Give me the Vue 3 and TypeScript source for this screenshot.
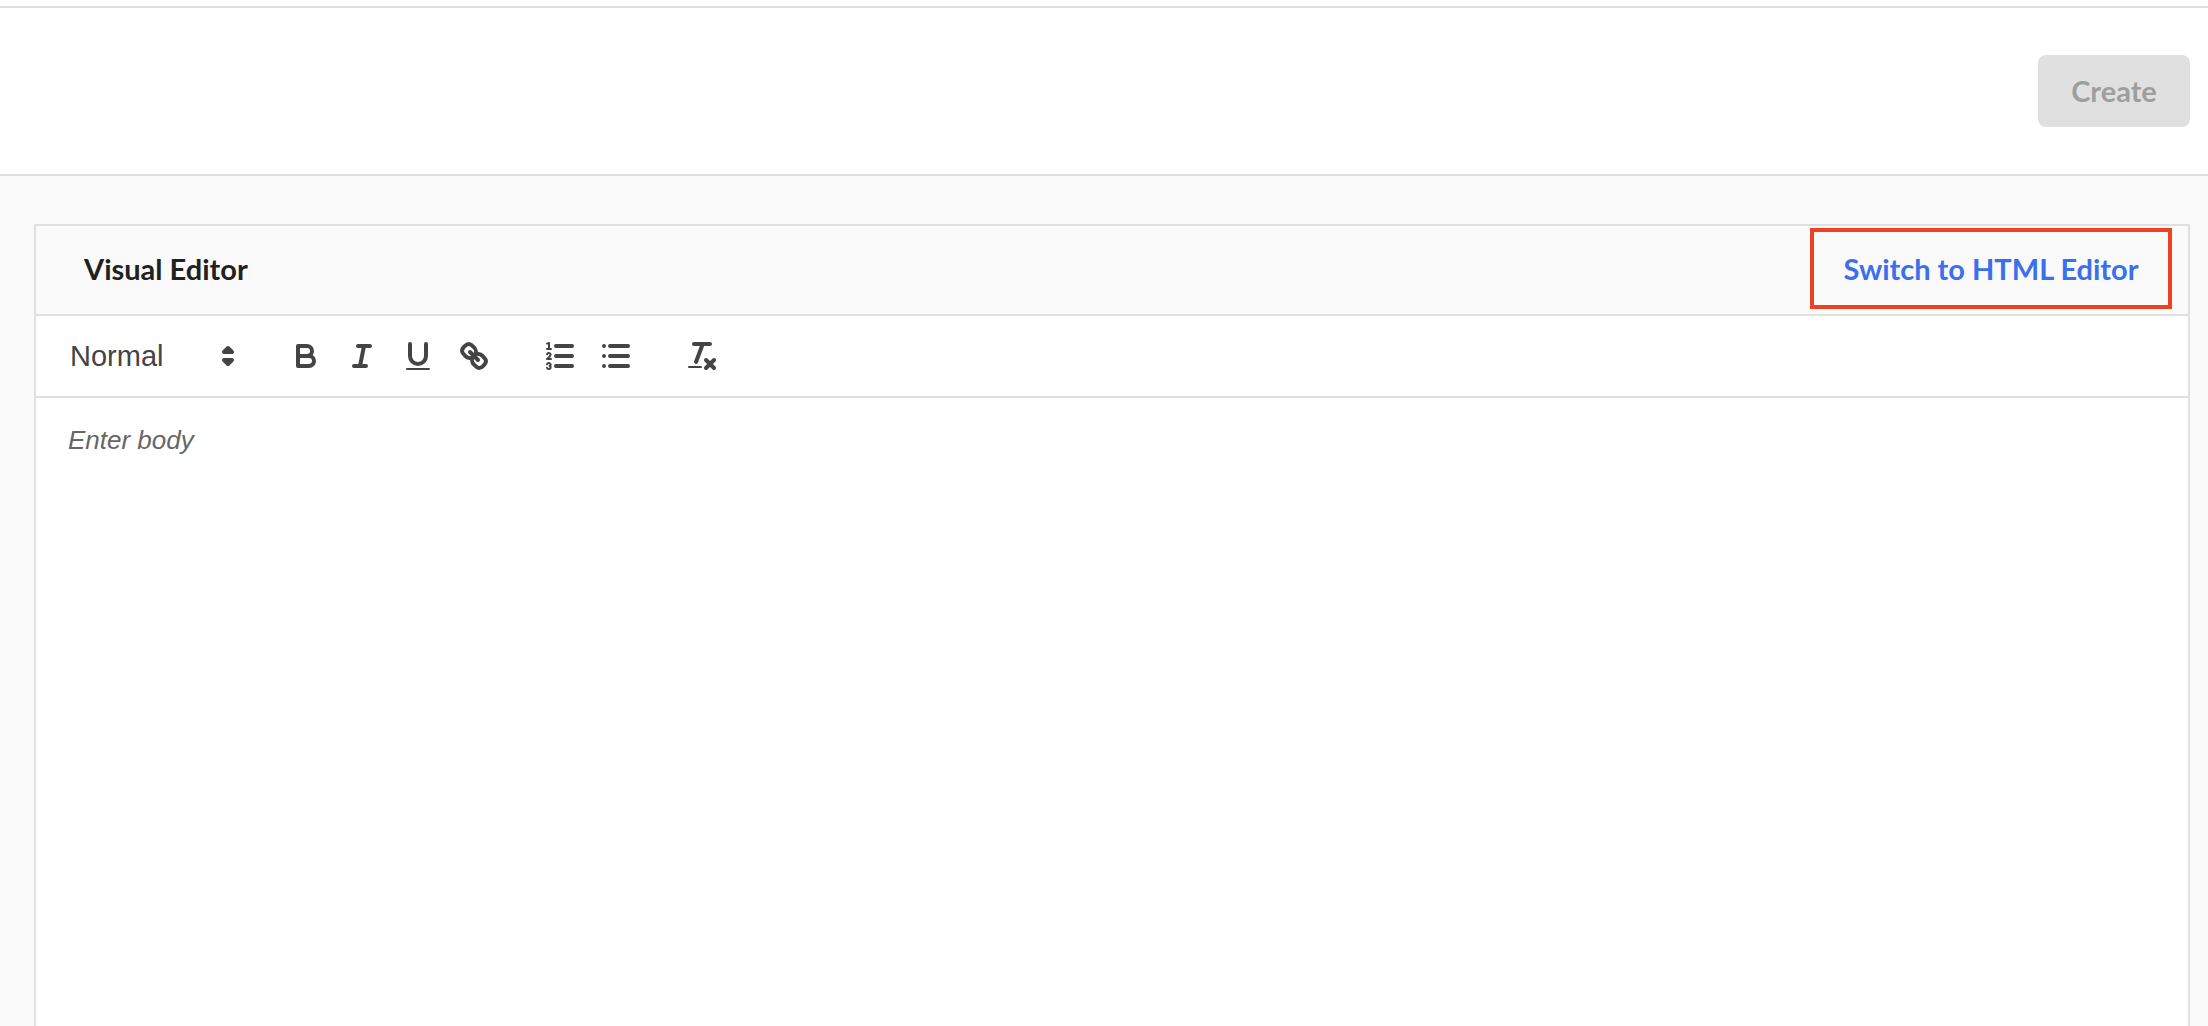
<script setup lang="ts">
import { ref } from 'vue'

const format = ref('Normal')
const body = ref('')
</script>

<template>
  <div class="page">
    <header class="topbar">
      <button class="create" type="button" disabled>Create</button>
    </header>
    <main class="content">
      <section class="editor">
        <div class="editor-head">
          <h2 class="title">Visual Editor</h2>
          <button class="switch" type="button">Switch to HTML Editor</button>
        </div>
        <div class="toolbar" role="toolbar" aria-label="Formatting">
          <div class="picker">
            <select v-model="format" aria-label="Text style">
              <option>Normal</option>
              <option>Heading 1</option>
              <option>Heading 2</option>
            </select>
            <svg class="icon" viewBox="0 0 18 18" aria-hidden="true">
              <polygon class="solid" points="7 11 9 13 11 11 7 11" />
              <polygon class="solid" points="7 7 9 5 11 7 7 7" />
            </svg>
          </div>
          <div class="group">
            <button type="button" class="tool" aria-label="Bold">
              <svg class="icon" viewBox="0 0 18 18">
                <path d="M5,4H9.5A2.5,2.5,0,0,1,12,6.5v0A2.5,2.5,0,0,1,9.5,9H5A0,0,0,0,1,5,9V4A0,0,0,0,1,5,4Z" />
                <path d="M5,9h5.5A2.5,2.5,0,0,1,13,11.5v0A2.5,2.5,0,0,1,10.5,14H5a0,0,0,0,1,0,0V9A0,0,0,0,1,5,9Z" />
              </svg>
            </button>
            <button type="button" class="tool" aria-label="Italic">
              <svg class="icon" viewBox="0 0 18 18">
                <path d="M7,4H13M5,14H11M8,14L10,4" />
              </svg>
            </button>
            <button type="button" class="tool" aria-label="Underline">
              <svg class="icon" viewBox="0 0 18 18">
                <path d="M5,3V9a4.012,4.012,0,0,0,4,4H9a4.012,4.012,0,0,0,4-4V3" />
                <rect class="fill" x="3" y="15" width="12" height="1" rx="0.5" />
              </svg>
            </button>
            <button type="button" class="tool" aria-label="Link">
              <svg class="icon" viewBox="0 0 18 18">
                <path d="M7,7L11,11" />
                <path d="M8.9,4.577a3.476,3.476,0,0,1,.36,4.679A3.476,3.476,0,0,1,4.577,8.9C3.185,7.5,2.035,6.4,4.217,4.217S7.5,3.185,8.9,4.577Z" />
                <path d="M13.423,9.1a3.476,3.476,0,0,0-4.679-.36,3.476,3.476,0,0,0,.36,4.679c1.392,1.392,2.5,2.542,4.679.36S14.815,10.5,13.423,9.1Z" />
              </svg>
            </button>
          </div>
          <div class="group">
            <button type="button" class="tool" aria-label="Numbered list">
              <svg class="icon" viewBox="0 0 18 18">
                <path d="M7,4H15M7,9H15M7,14H15" />
                <path class="thin" d="M2.5,5.5H4.5" />
                <path class="fill" d="M3.5,6A0.5,0.5,0,0,1,3,5.5V3.085l-0.276.138A0.5,0.5,0,0,1,2.053,3c-0.124-.247-0.023-0.324.224-0.447l1-.5A0.5,0.5,0,0,1,4,2.5v3A0.5,0.5,0,0,1,3.5,6Z" />
                <path class="thin" d="M4.5,10.5h-2c0-.234,1.85-1.076,1.85-2.234A0.959,0.959,0,0,0,2.5,8.156" />
                <path class="thin" d="M2.5,14.846a0.959,0.959,0,0,0,1.85-.109A0.7,0.7,0,0,0,3.75,14a0.688,0.688,0,0,0,.6-0.736,0.959,0.959,0,0,0-1.85-.109" />
              </svg>
            </button>
            <button type="button" class="tool" aria-label="Bulleted list">
              <svg class="icon" viewBox="0 0 18 18">
                <path d="M6,4H15M6,9H15M6,14H15M3,4H3M3,9H3M3,14H3" />
              </svg>
            </button>
          </div>
          <div class="group">
            <button type="button" class="tool" aria-label="Clear formatting">
              <svg class="icon" viewBox="0 0 18 18">
                <path d="M5,3H13M6,12L9.35,3M11,11L15,15M15,11L11,15" />
                <rect class="fill" x="2" y="14" width="7" height="1" rx="0.5" />
              </svg>
            </button>
          </div>
        </div>
        <textarea v-model="body" class="body" placeholder="Enter body" aria-label="Body"></textarea>
      </section>
    </main>
  </div>
</template>

<style>
body {
  margin: 0;
}
</style>

<style scoped>
* {
  box-sizing: border-box;
}
.page {
  display: flex;
  flex-direction: column;
  min-height: 100vh;
  padding-top: 6px;
  background: #fff;
  font-family: Lato, "Liberation Sans", sans-serif;
}
.topbar {
  display: flex;
  justify-content: flex-end;
  align-items: center;
  height: 170px;
  padding: 0 18px;
  border-top: 2px solid #dfdfdf;
  border-bottom: 2px solid #dfdfdf;
}
button {
  border: 0;
  background: none;
  font: inherit;
}
.create {
  min-width: 152px;
  height: 72px;
  padding: 0 32px 2px;
  border-radius: 8px;
  background: #e0e0e0;
  color: #9e9e9e;
  font-size: 29px;
  font-weight: 700;
}
.content {
  flex: 1;
  display: flex;
  padding: 48px 18px 0 34px;
  background: #fafafa;
}
.editor {
  flex: 1;
  display: flex;
  flex-direction: column;
  border: 2px solid #e0e0e0;
  border-bottom: 0;
}
.editor-head {
  display: flex;
  justify-content: space-between;
  align-items: flex-start;
  height: 90px;
  padding: 2px 16px 0 48px;
  border-bottom: 2px solid #e0e0e0;
}
.title {
  margin: 0;
  color: #212121;
  font-size: 29px;
  font-weight: 700;
  line-height: 82px;
}
.switch {
  min-width: 362px;
  height: 81px;
  padding: 0 28px;
  border: 4px solid #ee4023;
  color: #3a6fee;
  font-size: 29px;
  font-weight: 700;
}
.toolbar {
  display: flex;
  gap: 30px;
  padding: 16px;
  border-bottom: 2px solid #e0e0e0;
  background: #fff;
}
.picker {
  position: relative;
  width: 196px;
  height: 48px;
}
.picker select {
  width: 100%;
  height: 100%;
  padding: 0 40px 0 18px;
  border: 0;
  appearance: none;
  background: none;
  color: #444;
  font: 500 29px "Liberation Sans", Arial, sans-serif;
}
.picker .icon {
  position: absolute;
  top: 6px;
  right: 2px;
  pointer-events: none;
}
.group {
  display: flex;
}
.tool {
  width: 56px;
  height: 48px;
  padding: 6px 10px;
}
.icon {
  display: block;
  width: 36px;
  height: 36px;
  fill: none;
  stroke: #444;
  stroke-width: 2;
  stroke-linecap: round;
  stroke-linejoin: round;
}
.icon .thin {
  stroke-width: 1;
}
.icon .fill {
  fill: #444;
  stroke: none;
}
.icon .solid {
  fill: #444;
}
.body {
  flex: 1;
  width: 100%;
  padding: 24px 32px;
  border: 0;
  outline: 0;
  resize: none;
  background: #fff;
  color: #212121;
  font: 26px/37px "Liberation Sans", Arial, sans-serif;
}
.body::placeholder {
  color: #666;
  font-style: italic;
  opacity: 1;
}
</style>
